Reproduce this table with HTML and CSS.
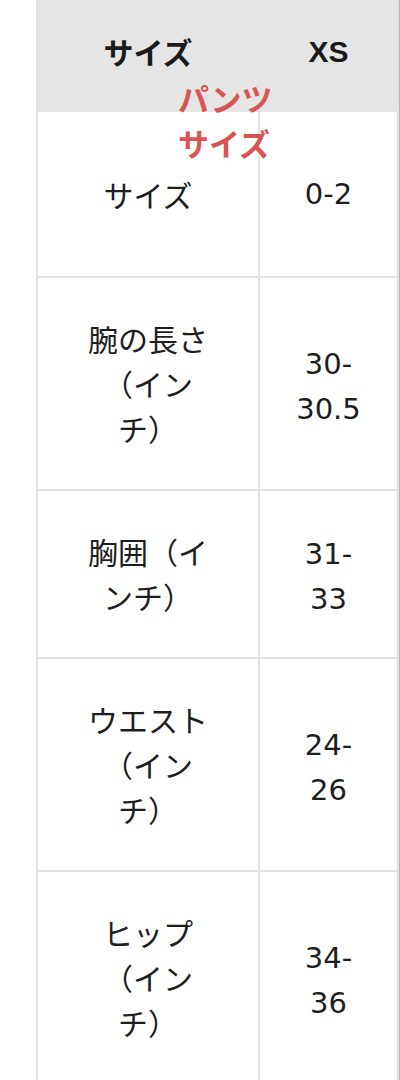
FILE: index.html
```html
<!DOCTYPE html>
<html lang="ja">
<head>
<meta charset="utf-8">
<link rel="stylesheet" href="styles.css">
</head>
<body>
<div class="page">
  <div class="table-wrap">
    <table class="size-table">
      <colgroup>
        <col class="col-label">
        <col class="col-value">
      </colgroup>
      <thead>
        <tr class="head-row">
          <th class="label">サイズ</th>
          <th class="value">XS</th>
        </tr>
      </thead>
      <tbody>
        <tr class="row-size">
          <td class="label">サイズ</td>
          <td class="value">0-2</td>
        </tr>
        <tr>
          <td class="label">腕の長さ（インチ）</td>
          <td class="value">30-30.5</td>
        </tr>
        <tr>
          <td class="label">胸囲（インチ）</td>
          <td class="value">31-33</td>
        </tr>
        <tr>
          <td class="label">ウエスト（インチ）</td>
          <td class="value">24-26</td>
        </tr>
        <tr>
          <td class="label">ヒップ（インチ）</td>
          <td class="value">34-36</td>
        </tr>
      </tbody>
    </table>
    <div class="overlay-label">
      <span class="overlay-line">パンツ</span>
      <span class="overlay-line">サイズ</span>
    </div>
  </div>
  <div class="edge"></div>
</div>
</body>
</html>
```

FILE: styles.css
```css
html, body {
  margin: 0;
  padding: 0;
  background: #ffffff;
}

body {
  font-family: "Noto Sans CJK JP", sans-serif;
  color: #1e1e1e;
  overflow: hidden;
}

.page {
  display: flex;
  padding-left: 36px;
  height: 1080px;
}

.table-wrap {
  position: relative;
  width: 361px;
}

.size-table {
  width: 361px;
  table-layout: fixed;
  border-collapse: collapse;
  margin-top: -2px;
}

.col-label {
  width: 222px;
}

.col-value {
  width: 139px;
}

.size-table th,
.size-table td {
  border: 2px solid #e2e2e2;
  padding: 38px 40px;
  line-height: 45px;
  text-align: center;
  vertical-align: middle;
  word-break: normal;
  line-break: strict;
  text-spacing-trim: space-all;
  font-weight: normal;
}

.size-table .label {
  font-family: "Noto Sans CJK JP", sans-serif;
  font-size: 30px;
}

.size-table .value {
  font-family: "DejaVu Sans", "Noto Sans CJK JP", sans-serif;
  font-size: 29px;
  padding-left: 30px;
  padding-right: 30px;
  padding-top: 41px;
  padding-bottom: 35px;
}

.head-row th {
  background: #e5e5e5;
  font-weight: bold;
  color: #1a1a1a;
  height: 112px;
  box-sizing: border-box;
  padding-top: 29px;
  padding-bottom: 0;
  vertical-align: top;
  border-color: #e5e5e5;
  border-left-color: #e2e2e2;
  border-right-color: #e2e2e2;
}

.head-row th.value {
  font-family: "Liberation Sans", sans-serif;
  font-size: 30px;
  font-weight: bold;
  padding-top: 29px;
  padding-bottom: 0;
}

.row-size td {
  height: 166px;
  box-sizing: border-box;
}

.row-size td.value {
  padding-top: 38px;
  padding-bottom: 38px;
}

.overlay-label {
  position: absolute;
  left: 142px;
  top: 75px;
  display: flex;
  flex-direction: column;
  font-size: 31px;
  line-height: 45px;
  font-weight: bold;
  color: #d95454;
}

.overlay-line {
  display: block;
}

.edge {
  width: 3px;
  background: #b8b8b8;
  height: 100%;
}
```
